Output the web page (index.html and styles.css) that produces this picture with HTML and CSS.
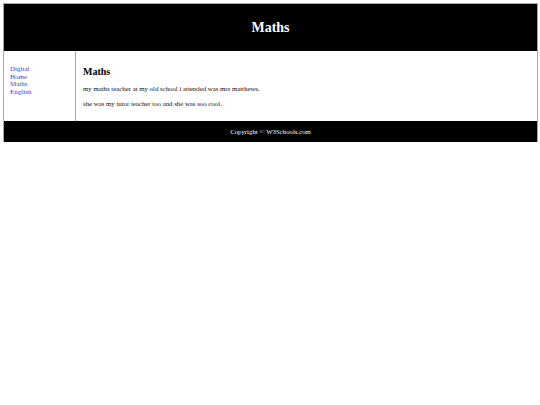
FILE: index.html
```html
<!DOCTYPE html>
<html>
<head>
<meta charset="utf-8">
<link rel="stylesheet" href="styles.css">
</head>
<body>
<div class="page">
  <header class="header"><h1 class="title">Maths</h1></header>
  <section class="middle">
    <nav class="side">
      <a href="#">Digital</a>
      <a href="#">Home</a>
      <a href="#">Maths</a>
      <a href="#">English</a>
    </nav>
    <article class="main">
      <h2 class="heading">Maths</h2>
      <p class="text">my maths teacher at my old school i attended was mrs matthews.</p>
      <p class="text">she was my tutor teacher too and she was soo cool.</p>
    </article>
  </section>
  <footer class="footer"><p class="copy">Copyright © W3Schools.com</p></footer>
</div>
</body>
</html>
```
FILE: styles.css
```css
html, body { margin: 0; padding: 0; background: #fff; }
body { padding: 3px; font-family: "Liberation Serif", "Times New Roman", serif; }
.page { border: 1px solid #a9a9a9; border-bottom: none; width: 533px; }
.header { background: #000; color: #fff; height: 47px; display: flex; align-items: center; justify-content: center; }
.title { margin: 0; font-size: 14px; font-weight: bold; }
.middle { display: flex; min-height: 70px; }
.side { width: 65px; padding: 15px 0 0 6px; border-right: 1px solid #a9a9a9; display: flex; flex-direction: column; font-size: 7px; line-height: 7.5px; }
.side a { color: #4040d8; text-decoration: none; }
.main { flex: 1; padding: 15px 7px 0 7px; }
.heading { margin: 0 0 8px 0; font-size: 10px; font-weight: bold; }
.text { margin: 0 0 7px 0; font-size: 6.8px; line-height: 8px; color: #111; }
.footer { background: #000; color: #fff; height: 21px; display: flex; align-items: center; justify-content: center; }
.copy { margin: 0; font-size: 6.8px; font-weight: normal; }
```
